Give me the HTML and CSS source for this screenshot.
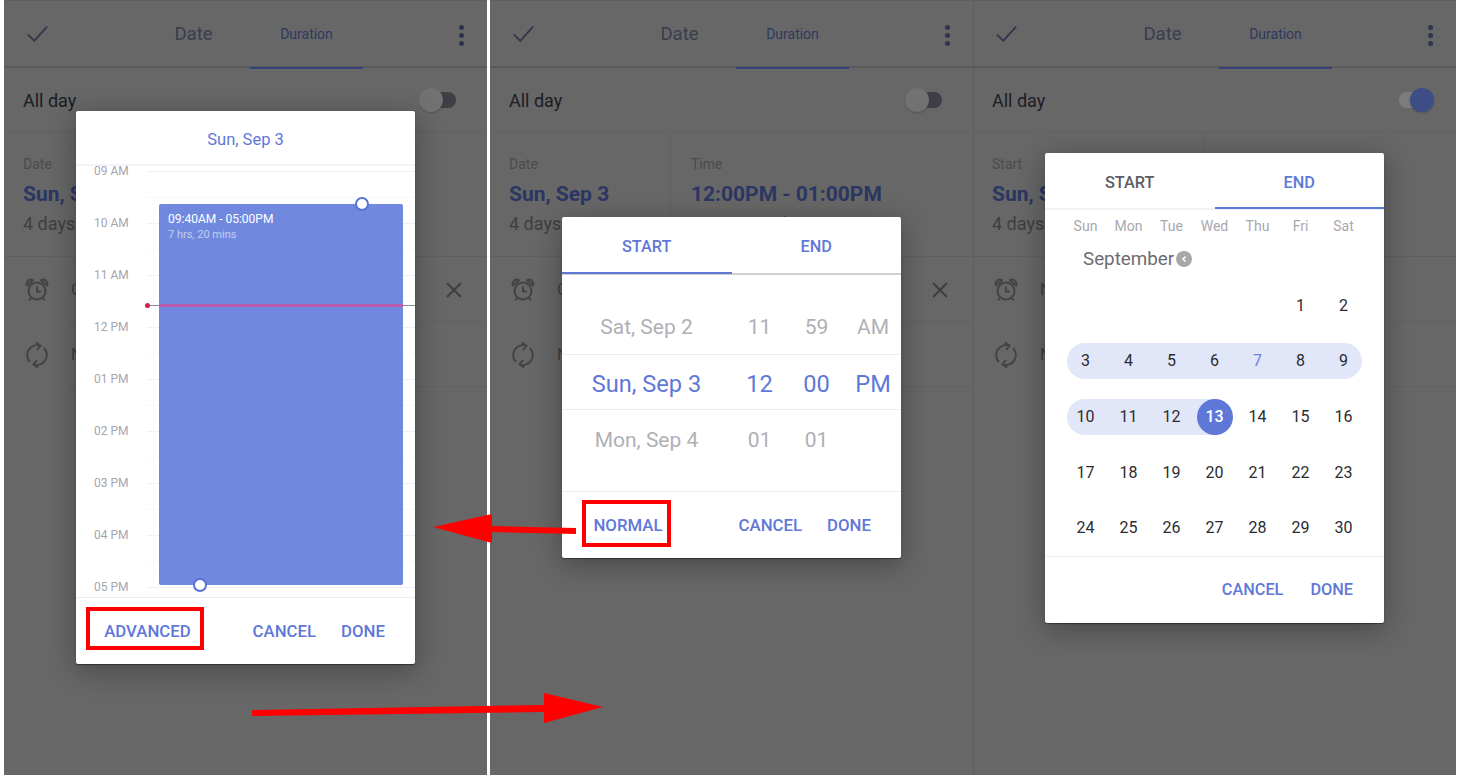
FILE: index.html
```html
<!DOCTYPE html>
<html lang="en">
<head>
    <meta charset="UTF-8">
    <title>Date and duration pickers</title>
    <link rel="stylesheet" href="styles.css">
</head>
<body>
    <div class="screens">

        <!-- advanced timeline picker -->
        <div class="screen">
            <div class="topbar">
                <svg class="check" viewBox="0 0 24 24"><path d="M2 12.5l7 7L23 4"/></svg>
                <div class="tab">Date</div>
                <div class="tab small active">Duration</div>
                <div class="dots"><i></i><i></i><i></i></div>
            </div>
            <div class="allday">
                <span>All day</span>
                <div class="toggle"><i></i></div>
            </div>
            <div class="when">
                <div class="when-col first">
                    <div class="when-label">Date</div>
                    <div class="when-value">Sun, Sep 3</div>
                    <div class="when-sub">4 days</div>
                </div>
                <div class="when-col">
                    <div class="when-label">Time</div>
                    <div class="when-value">12:00PM - 01:00PM</div>
                    <div class="when-sub">Duration: 1 hr</div>
                </div>
            </div>
            <div class="row">
                <svg class="row-icon" viewBox="0 0 24 24"><circle cx="12" cy="13" r="8.500"/><path d="M12 8.500v5h4M6 20l-2 2.500M18 20l2 2.500"/><path class="ear" d="M2 7.500A4.200 4.200 0 0 1 8 2.200zM22 7.500A4.200 4.200 0 0 0 16 2.200z"/></svg>
                <span class="row-text">On time</span>
                <svg class="row-close" viewBox="0 0 20 20"><path d="M3 3l14 14M17 3L3 17"/></svg>
            </div>
            <div class="row">
                <svg class="row-icon" viewBox="0 0 24 24"><path d="M5 19A10 10 0 0 1 15.500 2.600M11 -0.500L15.500 2.600 12 7M19 5A10 10 0 0 1 8.500 21.400M13 24.500L8.500 21.400 12 17"/></svg>
                <span class="row-text">No repeat</span>
            </div>

            <div class="dialog dialog-timeline">
                <div class="timeline-title">Sun, Sep 3</div>
                <div class="timeline">
                    <div class="hour first-hour"><span>09 AM</span></div>
                    <div class="hour"><span>10 AM</span></div>
                    <div class="hour"><span>11 AM</span></div>
                    <div class="hour"><span>12 PM</span></div>
                    <div class="hour"><span>01 PM</span></div>
                    <div class="hour"><span>02 PM</span></div>
                    <div class="hour"><span>03 PM</span></div>
                    <div class="hour"><span>04 PM</span></div>
                    <div class="hour"><span>05 PM</span></div>
                    <div class="event">
                        <div class="event-time">09:40AM - 05:00PM</div>
                        <div class="event-length">7 hrs, 20 mins</div>
                        <i class="handle handle-top"></i>
                        <i class="handle handle-bottom"></i>
                    </div>
                    <div class="now"><i class="now-dot"></i><i class="now-mark"></i></div>
                </div>
                <div class="actions">
                    <button class="action boxed boxed-advanced">ADVANCED</button>
                    <button class="action cancel-advanced">CANCEL</button>
                    <button class="action done">DONE</button>
                </div>
            </div>
        </div>

        <!-- normal wheel picker -->
        <div class="screen">
            <div class="topbar">
                <svg class="check" viewBox="0 0 24 24"><path d="M2 12.5l7 7L23 4"/></svg>
                <div class="tab">Date</div>
                <div class="tab small active">Duration</div>
                <div class="dots"><i></i><i></i><i></i></div>
            </div>
            <div class="allday">
                <span>All day</span>
                <div class="toggle"><i></i></div>
            </div>
            <div class="when">
                <div class="when-col first">
                    <div class="when-label">Date</div>
                    <div class="when-value">Sun, Sep 3</div>
                    <div class="when-sub">4 days</div>
                </div>
                <div class="when-col">
                    <div class="when-label">Time</div>
                    <div class="when-value">12:00PM - 01:00PM</div>
                    <div class="when-sub">Duration: 1 hr</div>
                </div>
            </div>
            <div class="row">
                <svg class="row-icon" viewBox="0 0 24 24"><circle cx="12" cy="13" r="8.500"/><path d="M12 8.500v5h4M6 20l-2 2.500M18 20l2 2.500"/><path class="ear" d="M2 7.500A4.200 4.200 0 0 1 8 2.200zM22 7.500A4.200 4.200 0 0 0 16 2.200z"/></svg>
                <span class="row-text">On time</span>
                <svg class="row-close" viewBox="0 0 20 20"><path d="M3 3l14 14M17 3L3 17"/></svg>
            </div>
            <div class="row">
                <svg class="row-icon" viewBox="0 0 24 24"><path d="M5 19A10 10 0 0 1 15.500 2.600M11 -0.500L15.500 2.600 12 7M19 5A10 10 0 0 1 8.500 21.400M13 24.500L8.500 21.400 12 17"/></svg>
                <span class="row-text">No repeat</span>
            </div>

            <div class="dialog dialog-wheel">
                <div class="dialog-tabs">
                    <div class="dialog-tab on">START</div>
                    <div class="dialog-tab">END</div>
                </div>
                <div class="wheel">
                    <div class="wheel-row">
                        <span>Sat, Sep 2</span><span>11</span><span>59</span><span>AM</span>
                    </div>
                    <div class="wheel-row picked">
                        <span>Sun, Sep 3</span><span>12</span><span>00</span><span>PM</span>
                    </div>
                    <div class="wheel-row below">
                        <span>Mon, Sep 4</span><span>01</span><span>01</span><span></span>
                    </div>
                </div>
                <div class="actions">
                    <button class="action boxed boxed-normal">NORMAL</button>
                    <button class="action cancel-normal">CANCEL</button>
                    <button class="action done">DONE</button>
                </div>
            </div>
        </div>

        <!-- calendar picker, all day on -->
        <div class="screen seam">
            <div class="topbar">
                <svg class="check" viewBox="0 0 24 24"><path d="M2 12.5l7 7L23 4"/></svg>
                <div class="tab">Date</div>
                <div class="tab small active">Duration</div>
                <div class="dots"><i></i><i></i><i></i></div>
            </div>
            <div class="allday">
                <span>All day</span>
                <div class="toggle on"><i></i></div>
            </div>
            <div class="when">
                <div class="when-col first wide">
                    <div class="when-label">Start</div>
                    <div class="when-value">Sun, Sep 3</div>
                    <div class="when-sub">4 days</div>
                </div>
            </div>
            <div class="row">
                <svg class="row-icon" viewBox="0 0 24 24"><circle cx="12" cy="13" r="8.500"/><path d="M12 8.500v5h4M6 20l-2 2.500M18 20l2 2.500"/><path class="ear" d="M2 7.500A4.200 4.200 0 0 1 8 2.200zM22 7.500A4.200 4.200 0 0 0 16 2.200z"/></svg>
                <span class="row-text">None</span>
            </div>
            <div class="row">
                <svg class="row-icon" viewBox="0 0 24 24"><path d="M5 19A10 10 0 0 1 15.500 2.600M11 -0.500L15.500 2.600 12 7M19 5A10 10 0 0 1 8.500 21.400M13 24.500L8.500 21.400 12 17"/></svg>
                <span class="row-text">No repeat</span>
            </div>

            <div class="dialog dialog-calendar">
                <div class="dialog-tabs cal-tabs">
                    <div class="dialog-tab grey">START</div>
                    <div class="dialog-tab on">END</div>
                </div>
                <div class="weekdays">
                    <span>Sun</span><span>Mon</span><span>Tue</span><span>Wed</span><span>Thu</span><span>Fri</span><span>Sat</span>
                </div>
                <div class="month">
                    <span>September</span>
                    <svg class="month-back" viewBox="0 0 16 16"><circle cx="8" cy="8" r="8"/><path d="M9.500 5.500L7 8l2.500 2.500"/></svg>
                </div>
                <div class="days">
                    <div class="week">
                        <span></span><span></span><span></span><span></span><span></span><span>1</span><span>2</span>
                    </div>
                    <div class="week">
                        <span class="range start">3</span><span class="range">4</span><span class="range">5</span><span class="range">6</span><span class="range today">7</span><span class="range">8</span><span class="range end">9</span>
                    </div>
                    <div class="week">
                        <span class="range start">10</span><span class="range">11</span><span class="range">12</span><span class="range last"><b>13</b></span><span>14</span><span>15</span><span>16</span>
                    </div>
                    <div class="week">
                        <span>17</span><span>18</span><span>19</span><span>20</span><span>21</span><span>22</span><span>23</span>
                    </div>
                    <div class="week">
                        <span>24</span><span>25</span><span>26</span><span>27</span><span>28</span><span>29</span><span>30</span>
                    </div>
                </div>
                <div class="actions actions-calendar">
                    <button class="action cancel-calendar">CANCEL</button>
                    <button class="action done">DONE</button>
                </div>
            </div>
        </div>

        <!-- red annotation arrows -->
        <svg class="arrows" viewBox="0 0 1460 775">
            <polygon points="433,527 492,514 492,526 576,528 576,534 492,532 492,543"/>
            <polygon points="252,710 544,705 544,693 603,707 544,723 544,712 252,716"/>
        </svg>
    </div>
</body>
</html>
```
FILE: styles.css
```css
html, body {
    margin: 0;
    padding: 0;
    background: #fff;
}
body {
    font-family: Roboto, "Liberation Sans", sans-serif;
    width: 1460px;
    height: 775px;
    overflow: hidden;
}
.screens {
    position: relative;
    display: flex;
    gap: 3px;
    width: 1460px;
    height: 775px;
    padding: 0 4px;
    box-sizing: border-box;
}
.screen {
    position: relative;
    width: 483px;
    height: 775px;
    background: #676767;
    border-top: 1px solid #5f5f5f;
    box-sizing: border-box;
}
.screen.seam {
    margin-left: -3px;
    box-shadow: inset 1px 0 0 #5e5e5e;
}

/* top bar */
.topbar {
    display: grid;
    grid-template-columns: 133px 113px 113px 1fr;
    height: 65px;
    border-bottom: 2px solid #5a5a5a;
}
.check {
    width: 22px;
    height: 22px;
    margin: 22px 0 0 22px;
    fill: none;
    stroke: #34374a;
    stroke-width: 2;
}
.tab {
    position: relative;
    text-align: center;
    line-height: 67px;
    font-size: 18.500px;
    color: #393e4e;
}
.tab.small {
    font-size: 14px;
    color: #2f3960;
}
.tab.active::after {
    content: "";
    position: absolute;
    left: 0;
    right: 0;
    bottom: -1px;
    height: 2px;
    background: #33427a;
}
.dots {
    display: flex;
    flex-direction: column;
    align-items: flex-end;
    gap: 3px;
    padding: 24px 23px 0 0;
}
.dots i {
    width: 5px;
    height: 5px;
    border-radius: 50%;
    background: #2d3450;
}

/* all day row */
.allday {
    display: flex;
    justify-content: space-between;
    align-items: center;
    height: 64px;
    padding: 0 31px 0 19px;
    border-bottom: 1px solid #626262;
    font-size: 18px;
    color: #1b1d24;
}
.toggle {
    position: relative;
    width: 26px;
    height: 16px;
    border-radius: 8px;
    background: #3e3f46;
}
.toggle i {
    position: absolute;
    left: -11px;
    top: -4px;
    width: 24px;
    height: 24px;
    border-radius: 50%;
    background: #727272;
    box-shadow: 0 1px 2px rgba(0, 0, 0, 0.2);
}
.toggle.on {
    background: #7c7c7c;
}
.toggle.on i {
    left: 11px;
    background: #3c4d88;
}

/* date / time section */
.when {
    display: flex;
    height: 123px;
    border-bottom: 1px solid #5f5f5f;
}
.when-col {
    padding: 22px 0 0 20px;
}
.when-col.first {
    width: 181px;
    padding-left: 19px;
    border-right: 1px solid #626262;
    box-sizing: border-box;
}
.when-col.first.wide {
    width: 232px;
}
.when-label {
    font-size: 14px;
    line-height: 18px;
    color: #4b4b4b;
}
.when-value {
    margin-top: 7px;
    font-size: 21px;
    line-height: 28px;
    font-weight: 700;
    color: #2b3663;
}
.when-sub {
    margin-top: 3px;
    font-size: 18px;
    line-height: 26px;
    color: #3f3f3f;
}

/* alarm and repeat rows */
.row {
    display: flex;
    align-items: center;
    height: 65px;
    padding-left: 21px;
    box-sizing: border-box;
    position: relative;
}
.row::after {
    content: "";
    position: absolute;
    left: 67px;
    right: 0;
    bottom: 0;
    height: 1px;
    background: #626262;
}
.row-icon {
    width: 24px;
    height: 24px;
    fill: none;
    stroke: #434343;
    stroke-width: 2;
    overflow: visible;
}
.row-icon .ear {
    stroke-linejoin: round;
}
.row-text {
    margin-left: 22px;
    font-size: 16px;
    color: #3f3f3f;
}
.row-close {
    width: 20px;
    height: 20px;
    margin-left: auto;
    margin-right: 23px;
    fill: none;
    stroke: #3f3f3f;
    stroke-width: 2;
}

/* dialogs */
.dialog {
    position: absolute;
    left: 72px;
    width: 339px;
    background: #fff;
    border-radius: 2px;
    box-shadow: 0 6px 28px rgba(0, 0, 0, 0.32), 0 1px 1px rgba(0, 0, 0, 0.4);
    display: flex;
    flex-direction: column;
}
.dialog-timeline {
    top: 110px;
    height: 553px;
}
.dialog-wheel {
    top: 216px;
    height: 341px;
}
.dialog-calendar {
    top: 152px;
    height: 470px;
}
.actions {
    display: flex;
    align-items: center;
    flex: 1;
    border-top: 1px solid #eeeef2;
    padding-right: 30px;
}
.actions-calendar {
    padding-right: 31px;
}
.action {
    background: none;
    border: none;
    padding: 0;
    font-family: inherit;
    font-size: 16.800px;
    font-weight: 500;
    color: #5f78d8;
    line-height: 20px;
    white-space: nowrap;
}
.actions-calendar .action {
    font-size: 16.300px;
}
.boxed {
    box-sizing: border-box;
    border: 4px solid #f00;
    text-align: center;
}
.boxed-advanced {
    width: 118px;
    height: 43px;
    margin: -10px 0 0 10px;
    padding: 5px 0 0 5px;
    position: relative;
    top: 2px;
}
.boxed-normal {
    width: 89px;
    height: 47px;
    margin: -4px 0 0 20px;
    padding: 4px 0 0 3px;
}
.cancel-advanced,
.cancel-normal {
    margin-left: auto;
    margin-right: 25px;
}
.cancel-calendar {
    margin-left: auto;
    margin-right: 27px;
}

/* timeline */
.timeline-title {
    height: 53px;
    line-height: 57px;
    text-align: center;
    font-size: 16.500px;
    color: #5f78d8;
    border-bottom: 2px solid #f3f4fa;
    flex: none;
}
.timeline {
    position: relative;
    height: 431px;
    flex: none;
    overflow: hidden;
}
.hour {
    display: flex;
    align-items: center;
    height: 52px;
    position: relative;
    padding-left: 18px;
    font-size: 12px;
    color: #a6a6ae;
}
.first-hour {
    margin-top: -21px;
}
.hour::before,
.hour::after {
    content: "";
    position: absolute;
    left: 71px;
    right: 0;
    height: 1px;
}
.hour::before {
    top: 26px;
    background: #f1f1f5;
}
.hour::after {
    top: 0;
    background: #f8f8fa;
}
.event {
    position: absolute;
    left: 83px;
    top: 38px;
    width: 244px;
    height: 381px;
    padding: 7px 0 0 9px;
    box-sizing: border-box;
    background: #7089df;
    border-radius: 2px;
}
.event-time {
    font-size: 12px;
    line-height: 16px;
    color: #fff;
}
.event-length {
    font-size: 11px;
    line-height: 15px;
    color: #c3cdf0;
}
.handle {
    position: absolute;
    width: 10px;
    height: 10px;
    border: 2px solid #5a72d8;
    border-radius: 50%;
    background: #fff;
}
.handle-top {
    left: 196px;
    top: -7px;
}
.handle-bottom {
    left: 34px;
    top: 374px;
}
.now {
    position: absolute;
    left: 71px;
    right: 0;
    top: 139px;
    height: 1px;
    background: #8b8b96;
}
.now-dot {
    position: absolute;
    left: -2px;
    top: -2px;
    width: 5px;
    height: 5px;
    border-radius: 50%;
    background: #d81b48;
}
.now-mark {
    position: absolute;
    left: 12px;
    top: -1px;
    width: 244px;
    height: 3px;
    background: #b95cae;
}

/* start / end tabs */
.dialog-tabs {
    display: flex;
    flex: none;
    height: 58px;
    border-bottom: 2px solid #cfcfd6;
    box-sizing: border-box;
}
.cal-tabs {
    height: 57px;
    border-bottom-color: #f1f2f8;
}
.dialog-tab {
    position: relative;
    flex: 1;
    text-align: center;
    line-height: 59px;
    font-size: 16.300px;
    font-weight: 500;
    color: #5f78d8;
}
.dialog-tab.grey {
    color: #5d5d66;
}
.dialog-tab.on::after {
    content: "";
    position: absolute;
    left: 0;
    right: 0;
    bottom: -1px;
    height: 2px;
    background: #5f78d8;
}

/* wheel */
.wheel {
    flex: none;
    height: 216px;
    padding-top: 24px;
    box-sizing: border-box;
}
.wheel-row {
    display: grid;
    grid-template-columns: 169px 57px 57px 56px;
    align-items: center;
    height: 55px;
    box-sizing: border-box;
    text-align: center;
    font-size: 21px;
    color: #b0b0b6;
}
.wheel-row.picked {
    height: 56px;
    padding-top: 3px;
    font-size: 23.600px;
    color: #5f78d8;
    border-top: 1px solid #eeeef1;
    border-bottom: 1px solid #eeeef1;
}
.wheel-row.below {
    padding-top: 4px;
}

/* calendar */
.weekdays,
.week {
    display: grid;
    grid-template-columns: repeat(7, 43px);
    padding-left: 19px;
    text-align: center;
}
.weekdays {
    flex: none;
    height: 32px;
    line-height: 32px;
    font-size: 14px;
    color: #a8a8b0;
}
.month {
    display: flex;
    align-items: center;
    flex: none;
    gap: 2px;
    height: 33px;
    padding-left: 38px;
    font-size: 18.800px;
    color: #6b6b73;
}
.month-back {
    width: 16px;
    height: 16px;
    fill: #a8a8a8;
}
.month-back path {
    fill: none;
    stroke: #fff;
    stroke-width: 1.500;
}
.days {
    flex: none;
    height: 281px;
    padding-top: 3px;
    box-sizing: border-box;
}
.week {
    height: 55.500px;
    align-items: center;
    font-size: 16px;
    color: #2b2b31;
}
.range {
    height: 36px;
    line-height: 36px;
    background: #e1e7f9;
}
.range.start {
    border-radius: 18px 0 0 18px;
    margin-left: 3px;
    padding-right: 3px;
}
.range.end {
    border-radius: 0 18px 18px 0;
    margin-right: 3px;
    padding-left: 3px;
}
.range.today {
    color: #6a82dc;
}
.range.last {
    background: linear-gradient(to right, #e1e7f9 50%, #fff 50%);
}
.range.last b {
    display: block;
    width: 36px;
    height: 36px;
    margin: 0 auto;
    border-radius: 50%;
    background: #5f78d8;
    color: #fff;
    font-weight: 500;
}

/* annotations */
.arrows {
    position: absolute;
    left: 0;
    top: 0;
    width: 1460px;
    height: 775px;
    fill: #f00;
    pointer-events: none;
}
```
